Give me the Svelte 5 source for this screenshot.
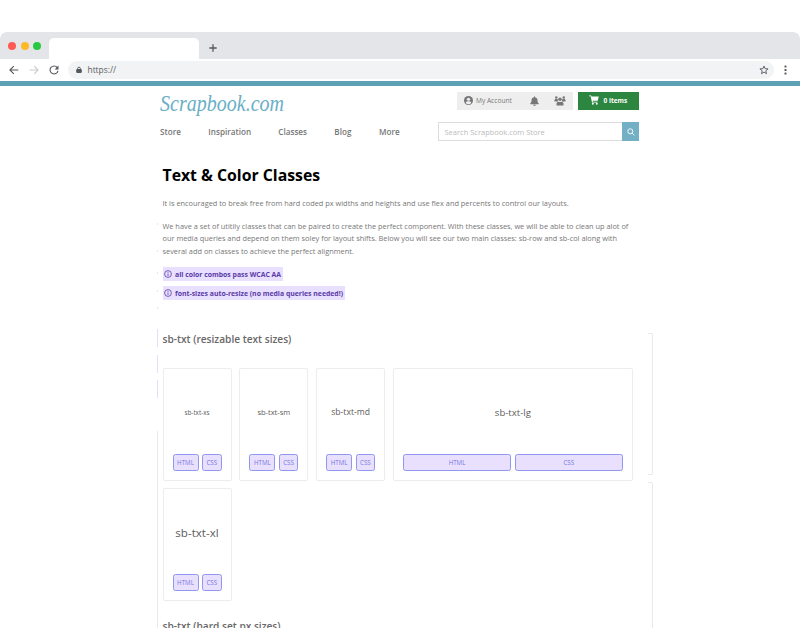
<script>
  const nav = [
    { label: 'Store', width: 48.3 },
    { label: 'Inspiration', width: 70 },
    { label: 'Classes', width: 56 },
    { label: 'Blog', width: 44.8 },
    { label: 'More', width: 30 }
  ];
  const cards = [
    { name: 'sb-txt-xs', size: 6.3 },
    { name: 'sb-txt-sm', size: 7.5 },
    { name: 'sb-txt-md', size: 8.6 },
    { name: 'sb-txt-lg', size: 9.6, wide: true },
    { name: 'sb-txt-xl', size: 11.6 }
  ];
  const notes = [
    'all color combos pass WCAC AA',
    'font-sizes auto-resize (no media queries needed!)'
  ];
  const specks = [53, 80, 102, 120, 137];
</script>

<div class="window">
  <div class="tabs">
    <div class="lights"><i class="red"></i><i class="amber"></i><i class="green"></i></div>
    <div class="tab"></div>
    <svg class="plus" width="8" height="8" viewBox="0 0 8 8"><path d="M4 0.3v7.4M0.3 4h7.4" /></svg>
  </div>
  <div class="toolbar">
    <svg class="ico back" width="10" height="10" viewBox="0 0 10 10"><path d="M9.3 5H1M4.8 1.1L.9 5l3.9 3.9" /></svg>
    <svg class="ico fwd" width="10" height="10" viewBox="0 0 10 10"><path d="M.7 5H9M5.2 1.1L9.1 5 5.2 8.9" /></svg>
    <svg class="ico reload" width="10" height="10" viewBox="0 0 10 10"><path d="M8.3 2.6A4 4 0 1 0 9 5.8" /><path class="fill" d="M9.5.4v4H5.6z" /></svg>
    <div class="address">
      <svg width="6" height="8" viewBox="0 0 6 8"><rect x=".2" y="3" width="5.6" height="4" rx="1.2" fill="#54575c" /><path d="M1.600 3.200V2.600a1.400 1.400 0 0 1 2.800 0v.6" fill="none" stroke="#54575c" stroke-width=".9" /></svg>
      <span>https://</span>
      <svg class="star" width="10" height="10" viewBox="0 0 10 10"><path d="M5 1l1.1 2.7 3 .2-2.3 1.9.7 2.9L5 7.1 2.500 8.700l.7-2.900L.9 3.900l3-.2z" /></svg>
    </div>
    <svg class="dots" width="3" height="10" viewBox="0 0 3 10" fill="#54575c"><rect x=".5" y=".5" width="2" height="2" rx=".6" /><rect x=".5" y="4" width="2" height="2" rx=".6" /><rect x=".5" y="7.500" width="2" height="2" rx=".6" /></svg>
  </div>
</div>

<div class="site">
  <header>
    <div class="top">
      <svg class="logo" width="130" height="32" viewBox="0 0 130 32"><text x="1" y="22" textLength="124" lengthAdjust="spacingAndGlyphs">Scrapbook.com</text></svg>
      <div class="account">
        <svg width="9" height="9" viewBox="0 0 18 18"><circle cx="9" cy="9" r="9" fill="#777" /><circle cx="9" cy="6.500" r="3.200" fill="#eee" /><path d="M3.400 14c1-3 3-3.500 5.600-3.500s4.600.5 5.600 3.500a8 8 0 0 1-11.200 0z" fill="#eee" /></svg>
        <span>My Account</span>
        <svg class="bell" width="9" height="10" viewBox="0 0 18 20" fill="#777"><path d="M8 1.500a1 1 0 0 1 2 0v1c3.500.6 5 3 5 6 0 3.500 1 5 2.500 6.300.6.700.3 1.700-.7 1.700H1.200c-1 0-1.300-1-.7-1.700C2 13.500 3 12 3 8.500c0-3 1.500-5.400 5-6zM6.500 17.500h5a2.500 2.500 0 0 1-5 0z" /></svg>
        <svg class="group" width="12" height="10" viewBox="0 0 24 20" fill="#777"><circle cx="4.500" cy="3" r="2.500" /><circle cx="19.500" cy="3" r="2.500" /><circle cx="12" cy="6.500" r="3.500" /><path d="M1 11V8.500c0-1.500 1-2.300 2.500-2.300H6c.8 0 1.200.2 1.700.6 0 1.700.5 3 1.500 4.200zM23 11V8.500c0-1.500-1-2.300-2.500-2.300H18c-.8 0-1.200.2-1.700.6 0 1.700-.5 3-1.500 4.200zM5 19v-3.500C5 13 6.500 11.800 8.500 11.800h7c2 0 3.500 1.200 3.500 3.700V19z" /></svg>
      </div>
      <div class="cart">
        <svg width="10" height="10" viewBox="0 0 20 20" fill="#fff"><path d="M0 1h4.500l.5 2h14.500l-2 8.500H7.200l.4 2H17V15H6L3.300 2.700H0z" /><circle cx="7.700" cy="17.500" r="1.900" /><circle cx="15.500" cy="17.500" r="1.900" /></svg>
        <b>0 items</b>
      </div>
    </div>
    <div class="bottom">
      <nav>{#each nav as item}<a style:width="{item.width}px">{item.label}</a>{/each}</nav>
      <div class="search">
        <span>Search Scrapbook.com Store</span>
        <div class="go"><svg width="8" height="8" viewBox="0 0 8 8"><circle cx="3.300" cy="3.300" r="2.500" /><path d="M5.200 5.200l2.200 2.200" /></svg></div>
      </div>
    </div>
  </header>

  <main>
    {#each specks as top}<i class="speck" style:top="{top}px"></i>{/each}
    <h1>Text &amp; Color Classes</h1>
    <p class="lead">It is encouraged to break free from hard coded px widths and heights and use flex and percents to control our layouts.</p>
    <p>We have a set of utitily classes that can be paired to create the perfect component. With these classes, we will be able to clean up alot of<br />our media queries and depend on them soley for layout shifts. Below you will see our two main classes: sb-row and sb-col along with<br />several add on classes to achieve the perfect alignment.</p>
    <div class="notes">
      {#each notes as note}
        <div class="note"><svg width="8" height="8" viewBox="0 0 8 8"><circle cx="4" cy="4" r="3.400" /><path d="M4 3.500v2.400M4 1.900v.9" /></svg><span>{note}</span></div>
      {/each}
    </div>
    <section>
      <div class="guide left a"></div><div class="guide left b"></div><div class="guide left c"></div><div class="guide left d"></div>
      <div class="guide right e"></div><div class="guide right f"></div>
      <h2>sb-txt (resizable text sizes)</h2>
      <div class="cards">
        {#each cards as card}
          <div class="card" class:wide={card.wide}>
            <div class="name" style:font-size="{card.size}px">{card.name}</div>
            <div class="buttons"><button class="html">HTML</button><button>CSS</button></div>
          </div>
        {/each}
      </div>
      <h2 class="next">sb-txt (hard set px sizes)</h2>
    </section>
  </main>
</div>

<style>
  :global(body) { background: #fff; overflow: hidden; }
  :global(#app) { height: 628px; overflow: hidden; font-family: "Open Sans", "Noto Sans", sans-serif; }
  svg { display: block; flex: none; }
  .window { padding-top: 32px; border-bottom: 5px solid #5da1b5; }
  .tabs { height: 27px; background: #e4e5e9; border-radius: 7px 7px 0 0; display: flex; box-sizing: border-box; padding-left: 8px; }
  .lights { display: flex; gap: 4.500px; padding-top: 9.500px; width: 41px; }
  .lights i { width: 8px; height: 8px; border-radius: 50%; }
  .red { background: #fe5b52; }
  .amber { background: #fdb928; }
  .green { background: #28c840; }
  .tab { width: 150px; height: 21.500px; margin-top: 5.500px; background: #fff; border-radius: 5px 5px 0 0; }
  .plus { margin: 12px 0 0 9.500px; }
  .plus path { stroke: #54575c; stroke-width: 1.300; }
  .toolbar { height: 22px; display: flex; align-items: center; padding-left: 8.500px; background: #fff; }
  .ico path { fill: none; stroke: #54575c; stroke-width: 1.100; }
  .ico path.fill { fill: #54575c; stroke: none; }
  .fwd { margin-left: 10.500px; opacity: .3; }
  .reload { margin-left: 10px; }
  .address { margin-left: 9px; width: 706px; height: 17.500px; border-radius: 9px; background: #f1f3f4; display: flex; align-items: center; padding: 0 5px 0 8px; box-sizing: border-box; color: #5b5e62; font-size: 8.400px; }
  .address span { margin: -1px 0 0 5.500px; }
  .star { margin-left: auto; }
  .star path { fill: none; stroke: #54575c; stroke-width: .9; }
  .dots { margin-left: 10px; }

  .site { width: 480px; margin-left: 159px; }
  header { height: 64px; }
  .top { display: flex; height: 36px; }
  .logo { margin-top: 3px; margin-right: 167.500px; }
  .logo text { font-family: "Liberation Serif", serif; font-style: italic; font-size: 23px; fill: #6aafc5; }
  .account { width: 116.500px; height: 18px; margin-top: 5.500px; background: #eee; display: flex; align-items: center; padding-left: 7px; box-sizing: border-box; font-size: 6.600px; color: #777; }
  .account span { margin-left: 3.500px; width: 54px; }
  .group { margin-left: 15px; }
  .cart { width: 60.500px; height: 18.500px; margin: 5.500px 0 0 5px; background: #2c863f; color: #fff; display: flex; align-items: center; padding: 0 0 1px 10.500px; gap: 5px; box-sizing: border-box; font-size: 6.500px; white-space: nowrap; }
  .bottom { display: flex; }
  nav { display: flex; width: 279px; padding: 4px 0 0 1px; box-sizing: border-box; font-size: 8.150px; line-height: 12px; font-weight: 600; color: #777; white-space: nowrap; }
  nav a { display: block; flex: none; }
  .search { width: 201px; height: 19px; border: 1px solid #ddd; box-sizing: border-box; display: flex; align-items: center; font-size: 7.500px; color: #bbb; padding-left: 5.500px; white-space: nowrap; }
  .go { margin: -1px -1px -1px auto; width: 17px; height: 19px; background: #74b0c5; display: flex; align-items: center; justify-content: center; }
  .go svg { fill: none; stroke: #fff; stroke-width: .9; }

  main { position: relative; margin-left: 3.500px; white-space: nowrap; }
  .speck { position: absolute; left: -6px; margin-top: 20px; width: 1px; height: 2px; background: #f4e4d6; }
  h1 { margin: 0; padding-top: 14px; font-size: 15.800px; line-height: 22px; font-weight: 700; color: #000; }
  p { margin: 10px 0 0; font-size: 7.380px; line-height: 12.600px; color: #777; }
  .lead { margin-top: 11px; }
  .notes { margin-top: 10px; display: flex; flex-direction: column; align-items: flex-start; gap: 5px; }
  .note { height: 14px; background: #e8e0fe; color: #5b3ba6; display: flex; align-items: center; gap: 3px; padding: 0 1.500px; font-size: 6.880px; font-weight: 700; }
  .note svg { fill: none; stroke: #5b3ba6; stroke-width: .8; }
  section { position: relative; margin-top: 32px; }
  h2 { margin: 0; font-size: 10.150px; line-height: 14px; font-weight: 600; color: #686868; }
  .cards { margin-top: 22px; width: 480px; display: flex; flex-wrap: wrap; gap: 7px 7.800px; }
  .card { width: 69px; height: 113px; box-sizing: border-box; border: 1px solid #ededed; border-radius: 2px; box-shadow: 0 0 1px #eee; padding: 0 9px 9px; display: flex; flex-direction: column; }
  .card.wide { width: 240px; }
  .name { height: 86px; display: flex; align-items: center; justify-content: center; color: #5c5c5c; }
  .buttons { display: flex; gap: 3.500px; margin-top: -1px; }
  button { flex: 1; height: 17px; box-sizing: border-box; border: 1px solid #8f97ee; border-radius: 2.500px; background: #e9e0fe; color: #7477e0; font: 6.200px "Open Sans", sans-serif; padding: 0; }
  .html { flex: 0 0 26px; }
  .wide .html { flex: 1; }
  .next { margin-top: 17.500px; }
  .guide { position: absolute; box-sizing: border-box; border: 0 solid #e9e9e9; }
  .left { left: -6px; width: 1px; border-left-width: 1px; }
  .a, .b, .c { height: 18px; border-color: #e5dfff; }
  .a { top: -3px; }
  .b { top: 23px; }
  .c { top: 48px; }
  .d { top: 99px; height: 210px; }
  .right { left: 485.500px; width: 5px; border-width: 1px 1px 1px 0; border-radius: 0 2px 2px 0; }
  .e { top: 1px; height: 142px; }
  .f { top: 150px; height: 160px; }
</style>
